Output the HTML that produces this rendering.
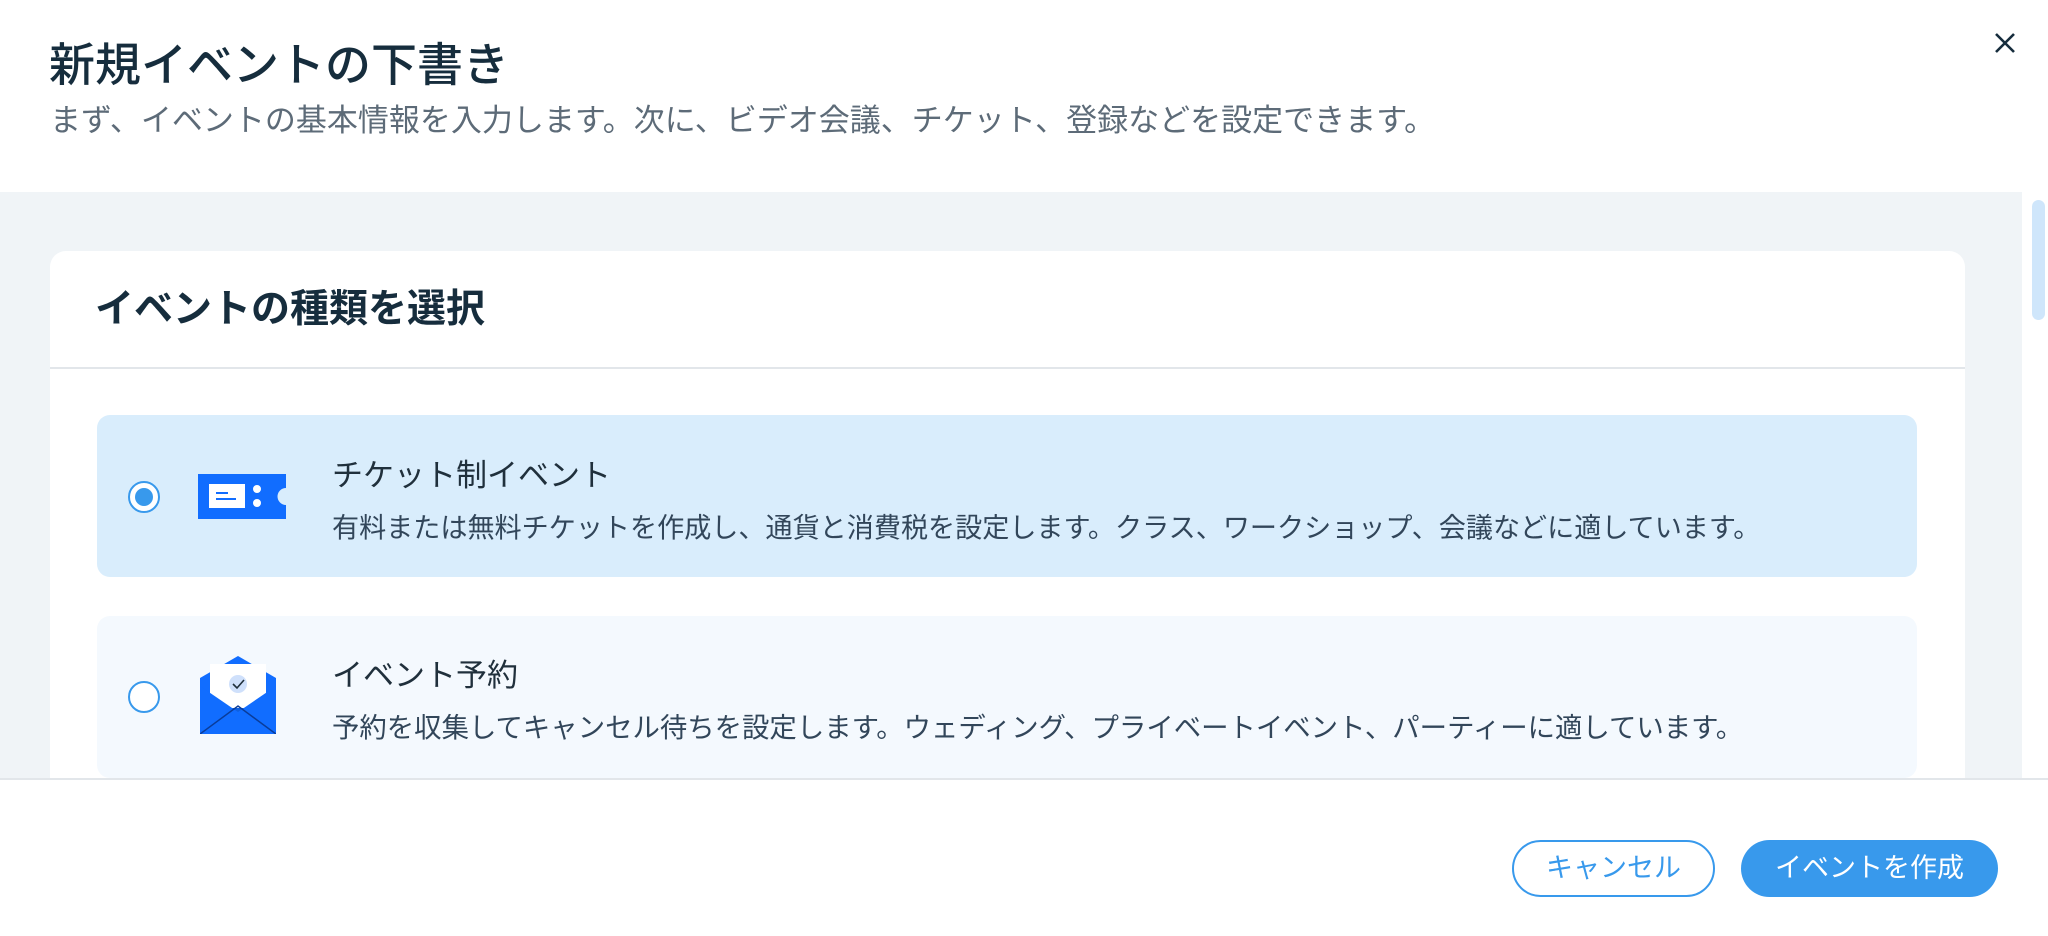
<!DOCTYPE html>
<html><head><meta charset="utf-8"><style>
*{margin:0;padding:0;box-sizing:border-box}
body{width:2048px;height:936px;background:#fff;font-family:"Liberation Sans","Noto Sans CJK JP",sans-serif;position:relative;overflow:hidden;color:#20303c}
.abs{position:absolute;white-space:nowrap}
</style></head><body>
<div class="abs" style="left:49px;top:35px;font-size:46px;font-weight:500;line-height:60px;color:#162d3d">新規イベントの下書き</div>
<div class="abs" style="left:50px;top:101px;font-size:31px;line-height:40px;color:#5d6b78">まず、イベントの基本情報を入力します。次に、ビデオ会議、チケット、登録などを設定できます。</div>
<svg class="abs" style="left:1993px;top:31px" width="24" height="24" viewBox="0 0 24 24"><path d="M3 3L21 21M21 3L3 21" stroke="#162d3d" stroke-width="2.6"/></svg>

<div class="abs" style="left:0;top:192px;width:2022px;height:586px;background:#f0f4f7;overflow:hidden">
  <div class="abs" style="left:50px;top:59px;width:1915px;height:600px;background:#fff;border-radius:16px 16px 0 0">
    <div class="abs" style="left:45px;top:34px;font-size:39px;font-weight:700;line-height:50px;color:#162d3d">イベントの種類を選択</div>
    <div class="abs" style="left:0;top:116px;width:1915px;height:2px;background:#e2e6ea"></div>
    <div class="abs" style="left:47px;top:164px;width:1820px;height:162px;background:#d9edfc;border-radius:13px">
      <div class="abs" style="left:31px;top:66px;width:32px;height:32px;border-radius:50%;border:2px solid #3899ec;background:#fff"></div>
      <div class="abs" style="left:38px;top:73px;width:18px;height:18px;border-radius:50%;background:#3899ec"></div>
      <svg class="abs" style="left:101px;top:59px" width="88" height="45" viewBox="0 0 88 45"><path d="M0 0H88V14A8.5 8.5 0 0 0 88 31V45H0Z" fill="#116dff"/><rect x="11" y="10" width="36" height="24" fill="#fff"/><path d="M18 19H30M18 25H38" stroke="#116dff" stroke-width="2"/><circle cx="59" cy="15" r="4" fill="#fff"/><circle cx="59" cy="29" r="4" fill="#fff"/></svg>
      <div class="abs" style="left:235px;top:40px;font-size:31px;line-height:42px;color:#20303c">チケット制イベント</div>
      <div class="abs" style="left:235px;top:95px;font-size:27.1px;line-height:36px;color:#32465a">有料または無料チケットを作成し、通貨と消費税を設定します。クラス、ワークショップ、会議などに適しています。</div>
    </div>
    <div class="abs" style="left:47px;top:365px;width:1820px;height:162px;background:#f4f9fe;border-radius:13px">
      <div class="abs" style="left:31px;top:65px;width:32px;height:32px;border-radius:50%;border:2px solid #3899ec;background:#fff"></div>
      <svg class="abs" style="left:103px;top:40px" width="76" height="78" viewBox="0 0 76 78"><path d="M0 22L38 0L76 22V78H0Z" fill="#116dff"/><rect x="10" y="8" width="56" height="44" fill="#fff"/><path d="M0 78L30 52H46L76 78Z" fill="#0e5fe0"/><path d="M0 30L38 56L76 30V78H0Z" fill="#116dff"/><path d="M0 78L38 50L76 78" stroke="#0a3c99" stroke-width="1.5" fill="none"/><circle cx="38" cy="28" r="9" fill="#cfe0fb"/><path d="M33 28L37 32L44 24" stroke="#20303c" stroke-width="1.6" fill="none"/></svg>
      <div class="abs" style="left:235px;top:39px;font-size:31px;line-height:42px;color:#20303c">イベント予約</div>
      <div class="abs" style="left:235px;top:94px;font-size:27.4px;line-height:36px;color:#32465a">予約を収集してキャンセル待ちを設定します。ウェディング、プライベートイベント、パーティーに適しています。</div>
    </div>
  </div>
</div>
<div class="abs" style="left:2032px;top:200px;width:13px;height:120px;background:#cfe6fb;border-radius:7px"></div>
<div class="abs" style="left:0;top:778px;width:2048px;height:2px;background:#e2e6ea"></div>
<div class="abs" style="left:1512px;top:840px;width:203px;height:57px;border:2px solid #3899ec;border-radius:29px;color:#3899ec;font-size:27px;line-height:53px;text-align:center">キャンセル</div>
<div class="abs" style="left:1741px;top:840px;width:257px;height:57px;background:#3899ec;border-radius:29px;color:#fff;font-size:27px;line-height:57px;text-align:center">イベントを作成</div>
</body></html>
